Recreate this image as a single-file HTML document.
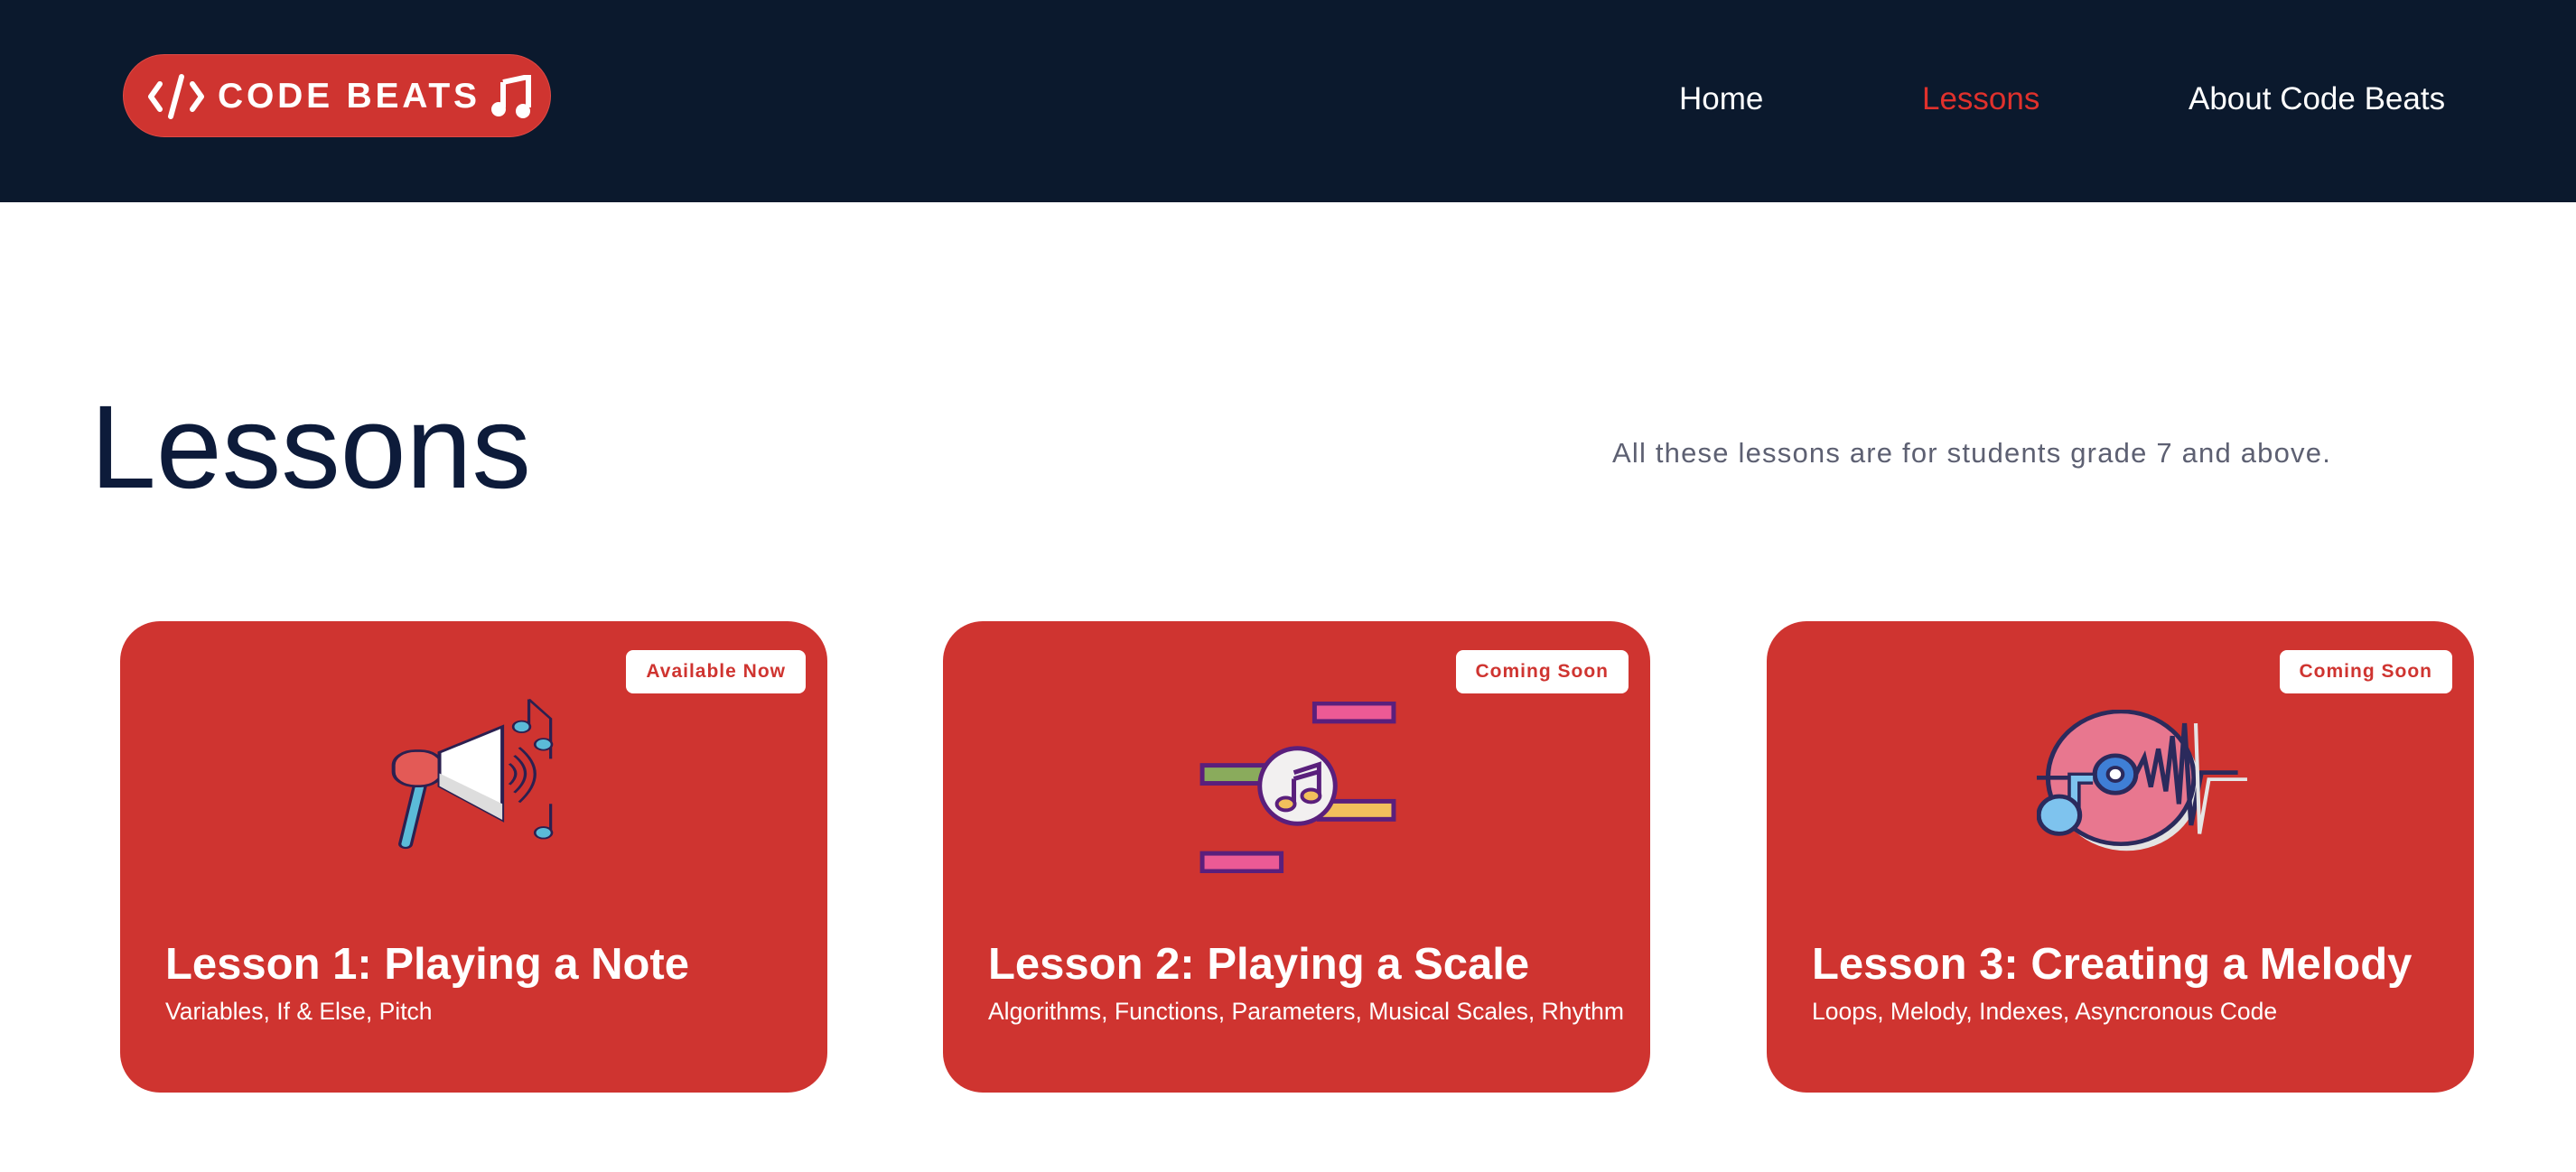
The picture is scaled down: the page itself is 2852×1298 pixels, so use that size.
<!DOCTYPE html>
<html><head><meta charset="utf-8"><style>
*{margin:0;padding:0;box-sizing:border-box}
body{width:2852px;height:1298px;background:#fff;font-family:"Liberation Sans",sans-serif;position:relative;overflow:hidden}
.hdr{position:absolute;left:0;top:0;width:2852px;height:224px;background:#0b192d}
.logo{position:absolute;left:136px;top:60px;width:474px;height:92px;border-radius:46px;background:#cf3430;border:1px solid #e04a45}
.logo span{position:absolute;left:104px;top:22px;color:#fff;font-size:39px;font-weight:bold;letter-spacing:3.8px;line-height:48px}
.nav{position:absolute;top:88px;font-size:35px;color:#fff;line-height:44px}
h1{position:absolute;left:100px;top:420px;font-size:131px;font-weight:normal;color:#0d1b3a;line-height:150px}
.sub{position:absolute;left:1785px;top:482px;font-size:31px;letter-spacing:1.2px;color:#5d6072;line-height:40px}
.card{position:absolute;top:688px;width:783px;height:522px;border-radius:44px;background:#cf3430}
.badge{position:absolute;top:32px;right:24px;height:48px;padding:0 22px;background:#fff;border-radius:8px;color:#cf3430;font-size:21px;font-weight:bold;line-height:48px;letter-spacing:1px}
.t{position:absolute;left:50px;top:349px;font-size:49px;font-weight:bold;color:#fff;line-height:62px;white-space:nowrap}
.d{position:absolute;left:50px;top:415px;font-size:26.5px;color:#fff;line-height:34px;white-space:nowrap}
svg{position:absolute}
</style></head><body>
<div class="hdr">
<div class="logo">
<svg style="left:26px;top:18px" width="64" height="56" viewBox="0 0 64 56"><g stroke="#fff" stroke-width="6" fill="none" stroke-linecap="round" stroke-linejoin="round"><path d="M14 14 L4 28 L14 42"/><path d="M50 14 L60 28 L50 42"/><path d="M38 6 L26 50"/></g></svg>
<span>CODE BEATS</span>
<svg style="left:406px;top:22px" width="46" height="48" viewBox="0 0 46 48"><path d="M14 8 L42 2 L42 36" stroke="#fff" stroke-width="6" fill="none"/><path d="M14 8 L14 36" stroke="#fff" stroke-width="6"/><circle cx="9" cy="38" r="8" fill="#fff"/><circle cx="36" cy="40" r="8" fill="#fff"/></svg>
</div>
<div class="nav" style="left:1859px">Home</div>
<div class="nav" style="left:2128px;color:#e0312c">Lessons</div>
<div class="nav" style="left:2423px">About Code Beats</div>
</div>
<h1>Lessons</h1>
<div class="sub">All these lessons are for students grade 7 and above.</div>

<div class="card" style="left:133px">
<div class="badge">Available Now</div>
<svg style="left:300px;top:83px" width="182" height="178" viewBox="0 0 68 100" preserveAspectRatio="none">
<path d="M12 55 L6 92" stroke="#2b2050" stroke-width="6" stroke-linecap="round"/>
<path d="M12 55 L6 92" stroke="#5bbbd8" stroke-width="3.5" stroke-linecap="round"/>
<rect x="1" y="34" width="20" height="22" rx="9" fill="#e35a56" stroke="#2b2050" stroke-width="1.5"/>
<path d="M20 35 L46 19 L46 77 L20 56 Z" fill="#fff" stroke="#2b2050" stroke-width="1.5"/>
<path d="M20 48 L46 67 L46 77 L20 56Z" fill="#ddd"/>
<g fill="none" stroke="#2b2050" stroke-width="1.2"><path d="M49 42 Q54 48 49 55"/><path d="M51 37 Q60 48 51 60"/><path d="M53 32 Q66 48 53 66"/></g>
<path d="M57 2 L66 14 L66 39 M57 2 L57 18" stroke="#2b2050" stroke-width="1.2" fill="none"/>
<circle cx="54" cy="19" r="3.5" fill="#5bbbd8" stroke="#2b2050"/><circle cx="63" cy="30" r="3.5" fill="#5bbbd8" stroke="#2b2050"/>
<path d="M66 67 L66 85" stroke="#2b2050" stroke-width="1.2"/><circle cx="63" cy="85" r="3.5" fill="#5bbbd8" stroke="#2b2050"/>
</svg>
<div class="t">Lesson 1: Playing a Note</div>
<div class="d">Variables, If &amp; Else, Pitch</div>
</div>

<div class="card" style="left:1044px">
<div class="badge">Coming Soon</div>
<svg style="left:284px;top:89px" width="218" height="190" viewBox="28 26 217 191">
<rect x="155" y="28" width="88" height="20" fill="#ec5a95" stroke="#5a1f7c" stroke-width="5"/>
<rect x="30" y="97" width="100" height="20" fill="#8aab5c" stroke="#5a1f7c" stroke-width="5"/>
<rect x="160" y="137" width="83" height="20" fill="#f2bf5c" stroke="#5a1f7c" stroke-width="5"/>
<rect x="30" y="195" width="88" height="20" fill="#ec5a95" stroke="#5a1f7c" stroke-width="5"/>
<circle cx="136" cy="120" r="42" fill="#f2f0f0" stroke="#5a1f7c" stroke-width="5"/>
<path d="M132 112 L132 140 M132 105 L160 96 L160 130 M132 112 L160 104" stroke="#5a1f7c" stroke-width="5" fill="none"/>
<ellipse cx="123" cy="140" rx="10" ry="7" fill="#f2bf5c" stroke="#5a1f7c" stroke-width="4"/>
<ellipse cx="151" cy="131" rx="10" ry="7" fill="#f2bf5c" stroke="#5a1f7c" stroke-width="4"/>
</svg>
<div class="t">Lesson 2: Playing a Scale</div>
<div class="d">Algorithms, Functions, Parameters, Musical Scales, Rhythm</div>
</div>

<div class="card" style="left:1956px">
<div class="badge">Coming Soon</div>
<svg style="left:299px;top:98px" width="234" height="160" viewBox="20 24 226 170" preserveAspectRatio="none">
<circle cx="116" cy="112" r="78" fill="#e3e3e3"/>
<circle cx="110" cy="104" r="78" fill="#e8778f" stroke="#2b2a5c" stroke-width="5"/>
<path d="M20 104 L60 104" stroke="#2b2a5c" stroke-width="5"/>
<circle cx="104" cy="100" r="22" fill="#3f7fd6" stroke="#2b2a5c" stroke-width="5"/><circle cx="104" cy="100" r="8" fill="#fff" stroke="#2b2a5c" stroke-width="4"/>
<path d="M126 100 L135 80 L142 115 L150 70 L158 120 L165 55 L172 135 L178 40 L185 160 L196 98 L235 98" stroke="#2b2a5c" stroke-width="5" fill="none"/>
<path d="M190 40 L194 170 L204 106 L245 106" stroke="#e5e5e5" stroke-width="4" fill="none"/>
<path d="M60 150 L60 105 L80 105" stroke="#2b2a5c" stroke-width="14" fill="none"/><path d="M60 150 L60 105 L80 105" stroke="#7ec3ee" stroke-width="7" fill="none"/>
<circle cx="44" cy="148" r="22" fill="#7ec3ee" stroke="#2b2a5c" stroke-width="5"/>
</svg>
<div class="t">Lesson 3: Creating a Melody</div>
<div class="d">Loops, Melody, Indexes, Asyncronous Code</div>
</div>
</body></html>
